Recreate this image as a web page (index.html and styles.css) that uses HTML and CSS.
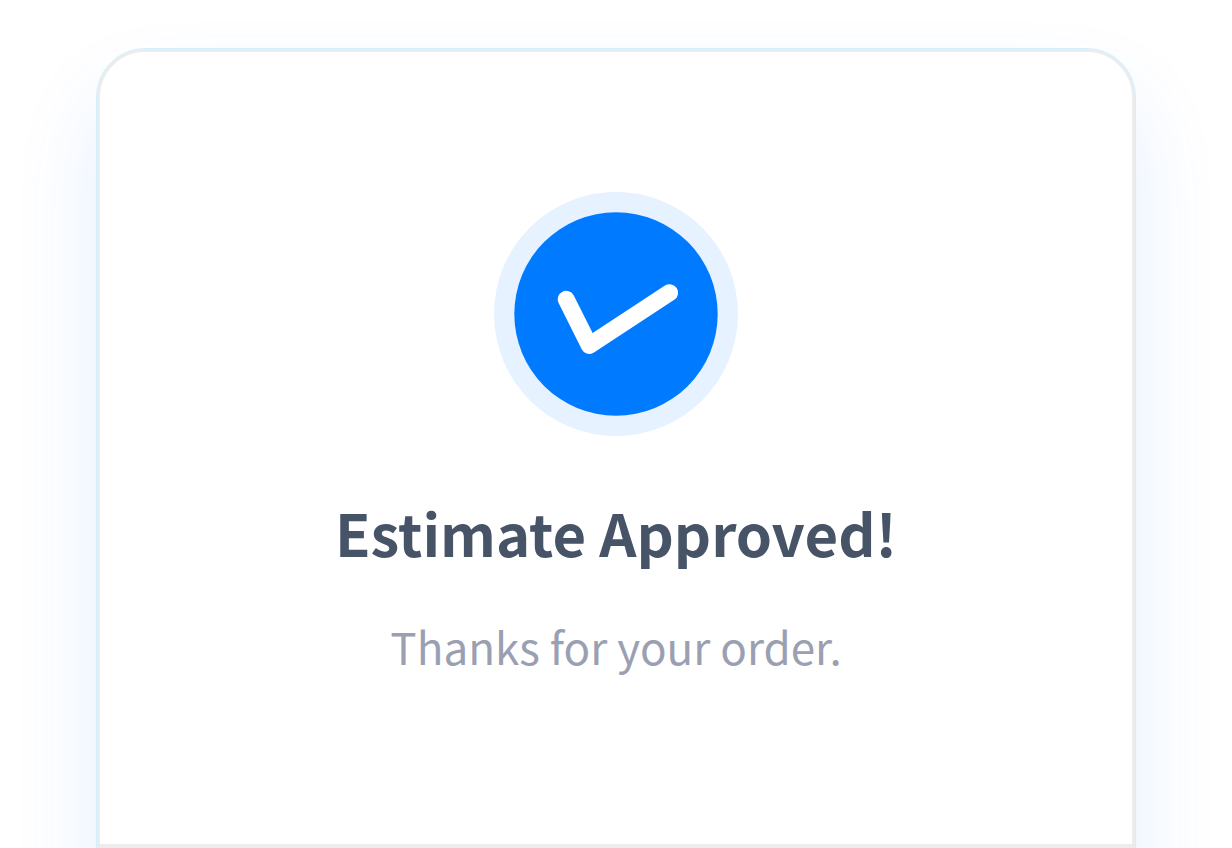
FILE: index.html
```html
<!DOCTYPE html>
<html lang="en">
<head>
  <meta charset="utf-8">
  <meta name="viewport" content="width=device-width, initial-scale=1">
  <title>Estimate Approved</title>
  <link rel="stylesheet" href="styles.css">
</head>
<body>
  <main class="page">
    <article class="card">
      <section class="confirmation">
        <svg class="badge" viewBox="0 0 244 244" aria-hidden="true">
          <circle class="badge-ring" cx="122" cy="122" r="122"/>
          <circle class="badge-disc" cx="122" cy="122" r="101.700"/>
          <path class="badge-check" d="M72.200 107.300 L95.300 153.400 L175.600 100.700"/>
        </svg>
        <h1 class="title">Estimate Approved!</h1>
        <p class="message">Thanks for your order.</p>
      </section>
      <div class="card-foot"></div>
    </article>
  </main>
</body>
</html>
```
FILE: styles.css
```css
* {
  box-sizing: border-box;
}

body {
  margin: 0;
  background: #ffffff;
  font-family: "Source Sans Pro", "Noto Sans CJK SC", sans-serif;
}

.page {
  height: 100vh;
  padding: 48px 96px 0;
  overflow: hidden;
}

.card {
  border: 3px solid #ebecee;
  border-radius: 48px;
  outline: 1px solid #d2efff;
  margin: 1px;
  background: #ffffff;
  box-shadow: 0 48px 88px rgba(0, 112, 255, 0.11);
}

.confirmation {
  display: flex;
  flex-direction: column;
  align-items: center;
  padding: 140px 32px 162px;
  border-bottom: 4px solid #ebecec;
  text-align: center;
}

.badge {
  width: 244px;
  height: 244px;
}

.badge-ring {
  fill: #e6f2ff;
}

.badge-disc {
  fill: #007aff;
}

.badge-check {
  fill: none;
  stroke: #ffffff;
  stroke-width: 17;
  stroke-linecap: round;
  stroke-linejoin: round;
}

.title {
  margin: 56px 0 0;
  color: #475467;
  font-size: 58px;
  font-weight: 700;
  line-height: 80px;
}

.message {
  margin: 38px 0 0;
  color: #9aa0b2;
  font-size: 44px;
  font-weight: 400;
  line-height: 72px;
}

.card-foot {
  height: 160px;
}
```
